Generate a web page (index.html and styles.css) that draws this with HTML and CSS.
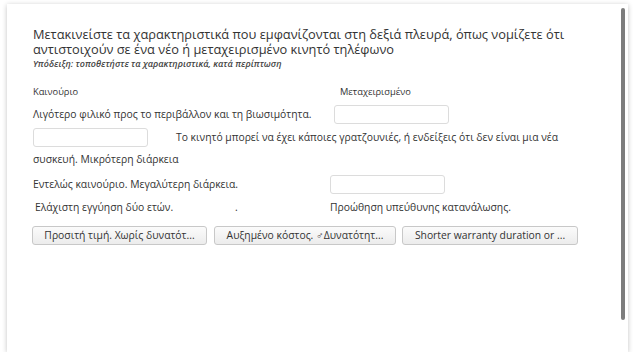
FILE: index.html
```html
<!DOCTYPE html>
<html lang="el">
<head>
<meta charset="utf-8">
<link rel="stylesheet" href="styles.css">
</head>
<body>
<div class="card">
  <div class="content">
    <h1 class="title">Μετακινείστε τα χαρακτηριστικά που εμφανίζονται στη δεξιά πλευρά, όπως νομίζετε ότι αντιστοιχούν σε ένα νέο ή μεταχειρισμένο κινητό τηλέφωνο</h1>
    <p class="hint">Υπόδειξη: τοποθετήστε τα χαρακτηριστικά, κατά περίπτωση</p>
    <div class="heads">
      <span class="head head-new">Καινούριο</span>
      <span class="head">Μεταχειρισμένο</span>
    </div>
    <div class="row row1">
      <span class="txt t1">Λιγότερο φιλικό προς το περιβάλλον και τη βιωσιμότητα.</span><span class="drop"></span>
    </div>
    <div class="row2">
      <span class="drop drop2"></span><span class="t2">Το κινητό μπορεί να έχει κάποιες γρατζουνιές, ή ενδείξεις ότι δεν είναι μια νέα συσκευή. Μικρότερη διάρκεια</span>
    </div>
    <div class="row row3">
      <span class="txt t3">Εντελώς καινούριο. Μεγαλύτερη διάρκεια.</span><span class="drop"></span>
    </div>
    <div class="row row4">
      <span class="txt c1">Ελάχιστη εγγύηση δύο ετών.</span><span class="txt c2">.</span><span class="txt">Προώθηση υπεύθυνης κατανάλωσης.</span>
    </div>
    <div class="buttons">
      <button class="btn b1">Προσιτή τιμή. Χωρίς δυνατότ...</button>
      <button class="btn b2">Αυξημένο κόστος. ♂Δυνατότητ...</button>
      <button class="btn b3">Shorter warranty duration or ...</button>
    </div>
  </div>
  <div class="scrollbar"></div>
</div>
</body>
</html>
```

FILE: styles.css
```css
html, body {
  margin: 0;
  padding: 0;
  background: #ffffff;
}
body {
  font-family: "Open Sans", "Noto Sans", sans-serif;
  color: #333333;
}
.card {
  position: relative;
  margin: 4px 0 0 7px;
  width: 621px;
  height: 348px;
  background: #ffffff;
  box-shadow: 0 1px 5px rgba(0, 0, 0, 0.24);
  box-sizing: border-box;
}
.content {
  padding: 23px 40px 0 26px;
}
.title {
  margin: 0;
  font-size: 12.8px;
  font-weight: 400;
  line-height: 15px;
  color: #333333;
}
.hint {
  margin: 1px 0 0 0;
  font-size: 9px;
  font-style: italic;
  font-weight: 600;
  line-height: 11px;
  color: #444444;
}
.heads {
  margin-top: 17px;
  display: flex;
  font-size: 9.3px;
  font-weight: 400;
  line-height: 12px;
  color: #333333;
}
.head-new {
  width: 307px;
}
.row {
  display: flex;
  align-items: center;
  height: 22px;
  font-size: 10.35px;
  white-space: nowrap;
}
.row1 {
  margin-top: 5px;
}
.t1 {
  width: 301px;
}
.row2 {
  margin-top: 1px;
  font-size: 10.35px;
  line-height: 22px;
}
.drop {
  display: block;
  box-sizing: border-box;
  width: 115px;
  height: 19px;
  border: 1px solid #dcdcdc;
  border-radius: 3px;
  background: #ffffff;
}
.drop2 {
  display: inline-block;
  vertical-align: middle;
  margin-right: 28px;
  position: relative;
  top: -1px;
}
.row3 {
  margin-top: 3px;
}
.t3 {
  width: 297px;
}
.row4 {
  margin-top: 1px;
  padding-left: 2px;
}
.c1 {
  width: 200px;
}
.c2 {
  width: 95px;
}
.buttons {
  margin-top: 8px;
  display: flex;
}
.btn {
  font-family: "Open Sans", "Noto Sans", sans-serif;
  font-size: 10.35px;
  color: #333333;
  height: 19px;
  padding: 0 6px;
  border: 1px solid #c8c8c8;
  border-radius: 3px;
  background: linear-gradient(#fbfbfb, #ececec);
  white-space: nowrap;
  line-height: 15px;
}
.b1 { width: 175px; margin-left: -1px; }
.b2 { width: 182px; margin-left: 7px; }
.b3 { width: 176px; margin-left: 6px; }
.scrollbar {
  position: absolute;
  top: 4px;
  right: 3px;
  width: 4px;
  height: 312px;
  border-radius: 2px;
  background: #7d7d7d;
}
```
